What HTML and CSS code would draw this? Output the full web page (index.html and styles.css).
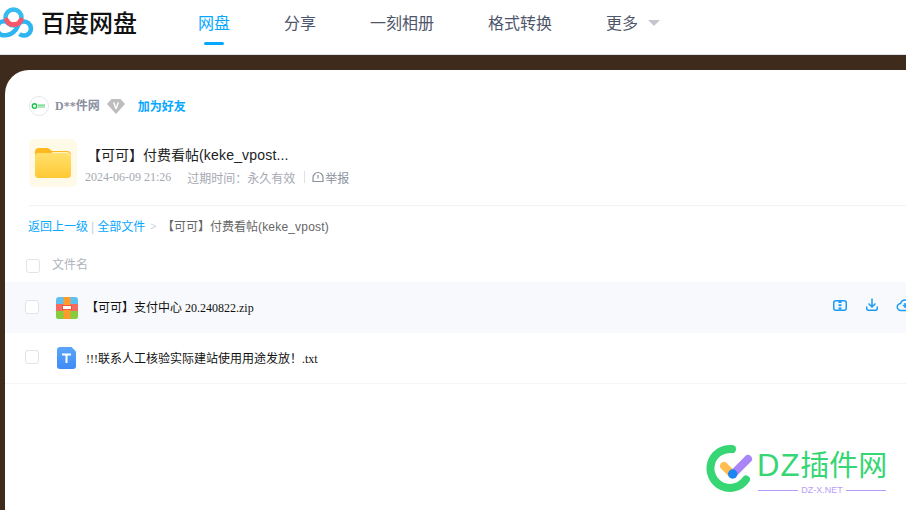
FILE: index.html
```html
<!DOCTYPE html>
<html lang="zh">
<head>
<meta charset="utf-8">
<title>百度网盘</title>
<link rel="stylesheet" href="styles.css">
</head>
<body>
<header class="topbar">
  <div class="brand">
    <svg class="brand-logo" width="34" height="42" viewBox="0 0 34 42" fill="none">
      <circle cx="13.500" cy="17.500" r="8" stroke="#35bdf0" stroke-width="4.500"/>
      <path d="M8 22.500A7 7 0 1 0 5 35.200C10 35.500 13 33 16 29.500L19 23.600A7 7 0 1 1 19.500 34" stroke="#2db5f2" stroke-width="4.500"/>
      <path d="M6.500 20A8 8 0 0 0 21 20" stroke="#f6586a" stroke-width="5" stroke-linecap="round"/>
    </svg>
    <span class="brand-name">百度网盘</span>
  </div>
  <nav class="nav">
    <a class="nav-item nav-active">网盘</a>
    <a class="nav-item">分享</a>
    <a class="nav-item">一刻相册</a>
    <a class="nav-item">格式转换</a>
    <a class="nav-item">更多<i class="caret"></i></a>
  </nav>
</header>
<main class="page">
  <section class="card">
    <div class="owner">
      <span class="avatar">
        <svg width="20" height="20" viewBox="0 0 20 20">
          <circle cx="10" cy="10" r="9.500" fill="#fff" stroke="#e3e6ec"/>
          <circle cx="5.500" cy="10" r="2.200" fill="none" stroke="#19c24a" stroke-width="1.400"/>
          <path d="M9 9.200h7M9 11h7" stroke="#5fd47e" stroke-width="1.200"/>
        </svg>
      </span>
      <span class="owner-name">D**件网</span>
      <svg class="vip" width="18" height="16" viewBox="0 0 18 16">
        <path d="M4.500 1h9L18 6l-9 10L0 6z" fill="#bdbdbd"/>
        <path d="M6 4.500h1.600L9 9l1.400-4.500H12L9.700 11H8.300z" fill="#fff"/>
      </svg>
      <a class="add-friend">加为好友</a>
    </div>
    <div class="share">
      <div class="folder-box">
        <svg width="38" height="34" viewBox="0 0 38 34">
          <defs>
            <linearGradient id="fg" x1="0" y1="0" x2="0" y2="1">
              <stop offset="0" stop-color="#ffe06b"/>
              <stop offset="1" stop-color="#ffc934"/>
            </linearGradient>
          </defs>
          <path d="M1 6a4 4 0 0 1 4-4h9l4 3h15a4 4 0 0 1 4 4v6H1z" fill="#ffb81f"/>
          <rect x="1" y="7" width="36" height="25" rx="3.500" fill="url(#fg)"/>
          <path d="M18 6.500h15a3 3 0 0 1 3 3" fill="none" stroke="#fff3c4" stroke-width="1"/>
        </svg>
      </div>
      <div class="share-info">
        <h1 class="share-title">【可可】付费看帖<span class="latin">(keke_vpost...</span></h1>
        <div class="meta">
          <span class="meta-date">2024-06-09 21:26</span>
          <span class="meta-expire">过期时间：永久有效</span>
          <i class="meta-sep"></i>
          <svg class="report-icon" width="12" height="12" viewBox="0 0 12 12">
            <path d="M1 10.500V6.500a5 5 0 0 1 10 0v4z" fill="none" stroke="#8c919e" stroke-width="1.200"/>
            <path d="M6 4v3.500" stroke="#8c919e" stroke-width="1.200"/>
          </svg>
          <span class="report">举报</span>
        </div>
      </div>
    </div>
    <div class="crumbs">
      <a class="crumb-link">返回上一级</a>
      <span class="crumb-bar">|</span>
      <a class="crumb-link">全部文件</a>
      <span class="crumb-gt">&gt;</span>
      <span class="crumb-current">【可可】付费看帖<span class="latin">(keke_vpost)</span></span>
    </div>
    <div class="list-head">
      <i class="check check-head"></i>
      <span class="list-head-name">文件名</span>
    </div>
    <div class="file-row file-row-hover">
      <i class="check"></i>
      <svg class="file-icon" width="22" height="22" viewBox="0 0 22 22">
        <rect width="22" height="22" rx="3" fill="#5cc0f2"/>
        <path d="M0 14h22v5a3 3 0 0 1-3 3H3a3 3 0 0 1-3-3z" fill="#86cc3c"/>
        <rect y="7" width="22" height="7" fill="#f56b63"/>
        <rect x="7.500" width="7" height="22" fill="#ff9b2b"/>
        <rect x="6.500" y="8.500" width="9" height="4" fill="#fff" stroke="#f4553f"/>
      </svg>
      <span class="file-name">【可可】支付中心 20.240822.zip</span>
      <div class="actions">
        <svg width="16" height="16" viewBox="0 0 16 16" fill="none" stroke="#1a9cf3">
          <rect x="1.750" y="2.750" width="12.500" height="9.500" rx="2" stroke-width="1.500"/>
          <path d="M8 3v9" stroke-width="3" stroke-dasharray="2 1.200"/>
        </svg>
        <svg width="16" height="16" viewBox="0 0 16 16" fill="none" stroke="#1a9cf3" stroke-width="1.500">
          <path d="M8 .5v8.500M4.500 5.500L8 9l3.500-3.500"/>
          <path d="M2.700 8.500v2.200a1.500 1.500 0 0 0 1.500 1.500h7.600a1.500 1.500 0 0 0 1.500-1.500V8.500"/>
        </svg>
        <svg width="18" height="16" viewBox="0 0 18 16" fill="none" stroke="#1a9cf3" stroke-width="1.500">
          <path d="M5 12.500a3.500 3.500 0 0 1-.5-7 5 5 0 0 1 9.500 0 3.500 3.500 0 0 1-.5 7z"/>
          <path d="M9 5v5M6.800 7.500H11.200"/>
        </svg>
      </div>
    </div>
    <div class="file-row file-row-last">
      <i class="check"></i>
      <svg class="file-icon" width="22" height="22" viewBox="0 0 22 22">
        <defs>
          <linearGradient id="tg" x1="0" y1="0" x2="0" y2="1">
            <stop offset="0" stop-color="#5aa6fb"/>
            <stop offset="1" stop-color="#3f8af5"/>
          </linearGradient>
        </defs>
        <path d="M4 0H15.500L20 4.500V19a3 3 0 0 1-3 3H4a3 3 0 0 1-3-3V3a3 3 0 0 1 3-3z" fill="url(#tg)"/>
        <path d="M6 6.500h9v2h-3.500V16h-2V8.500H6z" fill="#fff"/>
      </svg>
      <span class="file-name file-name-low">!!!联系人工核验实际建站使用用途发放！.txt</span>
    </div>
  </section>
</main>
<aside class="watermark">
  <svg class="wm-logo" width="50" height="52" viewBox="0 0 50 52" fill="none" stroke-linecap="round">
    <path d="M27 5A19.500 19.500 0 1 0 41 35.500" stroke="#37d675" stroke-width="8"/>
    <path d="M19 22l8 8" stroke="#ffbe4f" stroke-width="8"/>
    <path d="M28 30l15-15" stroke="#a986f7" stroke-width="8"/>
    <circle cx="27.700" cy="30" r="4.700" fill="#1c86f2"/>
  </svg>
  <div class="wm-text">
    <div class="wm-title"><span class="wm-latin">DZ</span>插件网</div>
    <div class="wm-sub"><i class="wm-line"></i><span>DZ-X.NET</span><i class="wm-line"></i></div>
  </div>
</aside>
</body>
</html>
```
FILE: styles.css
```css
* { box-sizing: border-box; }
html, body { margin: 0; height: 100%; }
body {
  width: 906px;
  height: 510px;
  overflow: hidden;
  position: relative;
  background: #3f2b1c;
  font-family: "Liberation Sans", "Noto Sans CJK SC", sans-serif;
}
a { text-decoration: none; }
i { display: block; font-style: normal; }

.topbar {
  height: 55px;
  display: flex;
  background: #fff;
  border-bottom: 1px solid #d9e0ee;
}
.brand { width: 196px; display: flex; align-items: flex-start; flex: none; }
.brand-logo { flex: none; margin-right: 7px; display: block; }
.brand-name { font: 500 24px/44px "Noto Sans CJK SC", sans-serif; color: #111; }
.nav { display: flex; gap: 54px; margin-left: 2px; }
.nav-item {
  position: relative;
  display: flex;
  align-items: center;
  height: 46px;
  padding-bottom: 3px;
  font: 400 16px/20px "Noto Sans CJK SC", sans-serif;
  color: #4e566b;
}
.nav-active { color: #06a7ff; }
.nav-active::after {
  content: "";
  position: absolute;
  left: 6px;
  bottom: 1px;
  width: 20px;
  height: 3px;
  border-radius: 2px;
  background: #06a7ff;
}
.caret {
  margin: 3px 0 0 10px;
  border-left: 6px solid transparent;
  border-right: 6px solid transparent;
  border-top: 6px solid #c4c7cf;
}

.page { padding: 15px 0 0 5px; }
.card {
  width: 920px;
  height: 440px;
  padding: 26px 18px 0 0;
  background: #fff;
  border-radius: 24px 0 0 0;
}

.owner { display: flex; align-items: center; height: 20px; margin-left: 24px; }
.avatar { width: 20px; height: 20px; display: block; }
.avatar svg { display: block; }
.owner-name {
  margin-left: 6px;
  font: 700 12px/20px "Liberation Serif", "Noto Sans CJK SC", serif;
  color: #8a90a1;
}
.vip { margin-left: 7px; }
.add-friend {
  margin-left: 13px;
  font: 700 12px/20px "Noto Sans CJK SC", sans-serif;
  color: #06a7ff;
}

.share {
  display: flex;
  margin: 23px 0 0 24px;
  height: 67px;
  border-bottom: 1px solid #f1f2f5;
}
.folder-box {
  width: 48px;
  height: 48px;
  display: flex;
  align-items: center;
  justify-content: center;
  background: #fff9e8;
  border-radius: 6px;
}
.share-info { margin-left: 10px; }
.share-title {
  margin: 5px 0 0;
  font: 400 14px/22px "Liberation Sans", "Noto Sans CJK SC", sans-serif;
  color: #222;
  white-space: nowrap;
}
.latin { letter-spacing: .18px; }
.meta {
  display: flex;
  align-items: center;
  height: 22px;
  font-size: 12px;
  color: #a6a9b2;
  white-space: nowrap;
}
.meta-date { font-family: "Liberation Serif", serif; margin-left: -2px; }
.meta-expire { margin-left: 16px; font-family: "Noto Sans CJK SC", sans-serif; }
.meta-sep { width: 1px; height: 12px; margin: 0 7px 0 9px; background: #dfe1e6; }
.report-icon { flex: none; }
.report { margin-left: 1px; font-family: "Noto Sans CJK SC", sans-serif; color: #8c919e; }

.crumbs {
  display: flex;
  align-items: center;
  height: 20px;
  margin: 11px 0 0 23px;
  font: 400 12px/20px "Liberation Sans", "Noto Sans CJK SC", sans-serif;
  white-space: nowrap;
}
.crumb-link { color: #06a7ff; }
.crumb-bar { margin: 0 3px; color: #c5d0dc; }
.crumb-gt { margin: 0 6px 0 5px; color: #c8d0dc; font-size: 10px; }
.crumb-current { color: #666; }

.list-head { display: flex; align-items: center; height: 22px; margin: 16px 0 0 21px; }
.check {
  flex: none;
  width: 14px;
  height: 14px;
  background: #fff;
  border: 1px solid #e1e3e8;
  border-radius: 3px;
}
.check-head { margin-top: 3px; }
.list-head-name { margin-left: 12px; font: 400 12px/20px "Noto Sans CJK SC", sans-serif; color: #afb3bf; }

.file-row {
  display: flex;
  align-items: center;
  height: 51px;
  padding-left: 20px;
}
.file-row-hover { margin-top: 7px; background: #f7f9fc; }
.file-row-last { border-bottom: 1px solid #f3f4f6; width: 918px; }
.file-row .check { margin-top: -2px; }
.file-icon { flex: none; margin-left: 17px; }
.file-name {
  margin-left: 8px;
  font: 400 12px/20px "Liberation Serif", "Noto Sans CJK SC", serif;
  color: #111;
  white-space: nowrap;
}
.file-name-low { padding-top: 2px; }
.actions {
  display: flex;
  gap: 16px;
  position: absolute;
  left: 832px;
  top: 298px;
}
.actions svg { display: block; }

.watermark {
  position: absolute;
  left: 705px;
  top: 444px;
  display: flex;
}
.wm-logo { flex: none; display: block; }
.wm-text { margin-left: 3px; width: 128px; }
.wm-title {
  font: 400 29px/38px "Noto Sans CJK SC", sans-serif;
  color: #37d675;
  white-space: nowrap;
  margin-left: -1px;
}
.wm-latin { font: 400 31px/38px "Liberation Sans", sans-serif; letter-spacing: 1px; }
.wm-sub {
  display: flex;
  align-items: center;
  gap: 3px;
  margin-top: -1px;
  font: 400 9px/12px "Liberation Sans", sans-serif;
  color: #b99cf8;
  white-space: nowrap;
}
.wm-line { flex: 1; height: 1px; background: #b99cf8; }
```
